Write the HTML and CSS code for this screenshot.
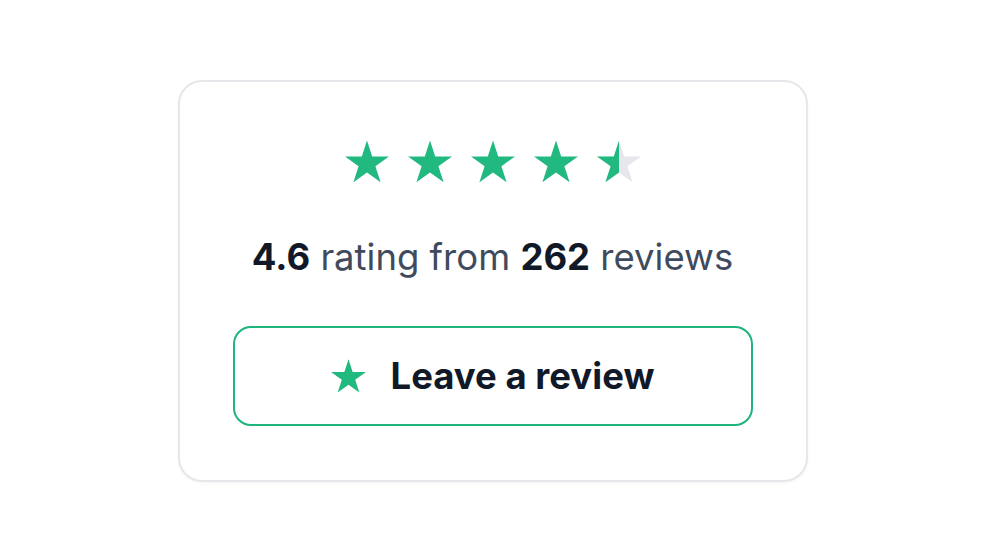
FILE: index.html
```html
<!DOCTYPE html>
<html lang="en">
<head>
    <meta charset="UTF-8">
    <meta name="viewport" content="width=device-width, initial-scale=1.0">
    <title>Reviews</title>
    <link rel="stylesheet" href="styles.css">
</head>
<body>
    <div class="card">
        <div class="stars">
            <svg class="star" viewBox="0 0 44 42"><polygon points="22,0 27.2,15.98 44,15.98 30.41,25.86 35.6,41.84 22,31.97 8.4,41.84 13.59,25.86 0,15.98 16.8,15.98"/></svg>
            <svg class="star" viewBox="0 0 44 42"><polygon points="22,0 27.2,15.98 44,15.98 30.41,25.86 35.6,41.84 22,31.97 8.4,41.84 13.59,25.86 0,15.98 16.8,15.98"/></svg>
            <svg class="star" viewBox="0 0 44 42"><polygon points="22,0 27.2,15.98 44,15.98 30.41,25.86 35.6,41.84 22,31.97 8.4,41.84 13.59,25.86 0,15.98 16.8,15.98"/></svg>
            <svg class="star" viewBox="0 0 44 42"><polygon points="22,0 27.2,15.98 44,15.98 30.41,25.86 35.6,41.84 22,31.97 8.4,41.84 13.59,25.86 0,15.98 16.8,15.98"/></svg>
            <svg class="star" viewBox="0 0 44 42">
                <defs><clipPath id="half"><rect x="0" y="0" width="22" height="42"/></clipPath></defs>
                <polygon class="empty" points="22,0 27.2,15.98 44,15.98 30.41,25.86 35.6,41.84 22,31.97 8.4,41.84 13.59,25.86 0,15.98 16.8,15.98"/>
                <polygon clip-path="url(#half)" points="22,0 27.2,15.98 44,15.98 30.41,25.86 35.6,41.84 22,31.97 8.4,41.84 13.59,25.86 0,15.98 16.8,15.98"/>
            </svg>
        </div>
        <p class="summary"><strong>4.6</strong> rating from <strong>262</strong> reviews</p>
        <button class="review-btn">
            <svg class="btn-star" viewBox="0 0 44 42"><polygon points="22,0 27.2,15.98 44,15.98 30.41,25.86 35.6,41.84 22,31.97 8.4,41.84 13.59,25.86 0,15.98 16.8,15.98"/></svg>
            Leave a review
        </button>
    </div>
</body>
</html>
```

FILE: styles.css
```css
/* page */
body {
    margin: 0;
    height: 555px;
    display: flex;
    align-items: center;
    justify-content: center;
    background: #fff;
    font-family: Inter, "Noto Sans", sans-serif;
}

.card {
    box-sizing: border-box;
    width: 630px;
    margin: 6px 0 0 -5px;
    padding: 58px 53px 54px;
    border: 2px solid #e5e7eb;
    border-radius: 24px;
    background: #fff;
    box-shadow: 0 1px 3px rgba(0, 0, 0, 0.04);
    display: flex;
    flex-direction: column;
    align-items: center;
}

.stars {
    display: flex;
    gap: 19px;
}

.star {
    width: 44px;
    height: 43px;
    fill: #21b97f;
}

.star .empty {
    fill: #e5e7eb;
}

.summary {
    margin: 54px 0 0;
    font-size: 36.5px;
    line-height: 40px;
    color: #3f4b5c;
}

.summary strong {
    font-weight: 700;
    color: #111827;
}

.review-btn {
    margin-top: 49px;
    width: 100%;
    height: 100px;
    border: 2px solid #1fb47b;
    border-radius: 18px;
    background: #fff;
    display: flex;
    align-items: center;
    justify-content: center;
    gap: 25px;
    font-family: inherit;
    font-size: 36.5px;
    font-weight: 700;
    color: #111827;
    padding: 0;
}

.btn-star {
    width: 35px;
    height: 34px;
    fill: #21b97f;
}
```
